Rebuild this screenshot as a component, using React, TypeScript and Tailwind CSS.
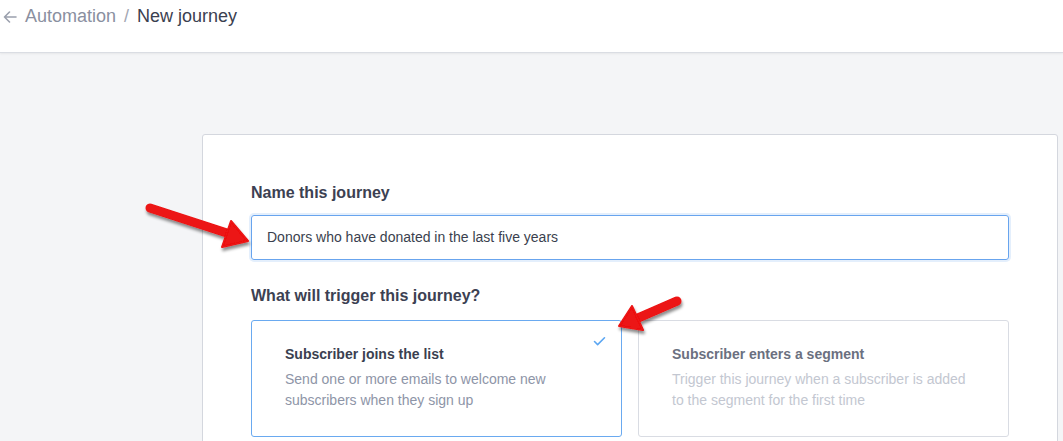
import { Check } from "lucide-react";

const TriggerCard = ({
  title,
  text,
  active,
}: {
  title: string;
  text: string;
  active?: boolean;
}) => (
  <div
    className={`relative rounded-[3px] border bg-white pl-[33px] pr-[40px] pt-[22px] pb-[25px] ${
      active ? "border-[#6aaaf0]" : "border-[#d9dce3]"
    }`}
  >
    {active && (
      <Check
        className="absolute right-[14px] top-[13px] text-[#5ba6f2]"
        size={15}
        strokeWidth={2.5}
      />
    )}
    <div
      className={`text-[14px] font-bold leading-[22px] ${
        active ? "text-[#3a3f50]" : "text-[#6b7080]"
      }`}
    >
      {title}
    </div>
    <div
      className={`mt-[4px] text-[14px] leading-[21px] ${
        active ? "text-[#8e95a7]" : "text-[#c3c7d1]"
      }`}
    >
      {text}
    </div>
  </div>
);

const Arrows = () => (
  <svg
    className="pointer-events-none absolute left-0 top-0"
    width="1063"
    height="441"
    viewBox="0 0 1063 441"
  >
    <defs>
      <filter id="shadow" x="-20%" y="-20%" width="140%" height="160%">
        <feDropShadow dx="1" dy="3" stdDeviation="1.5" floodColor="#000" floodOpacity="0.45" />
      </filter>
    </defs>
    <g filter="url(#shadow)" fill="#ec1212" stroke="#ec1212">
      {/* arrow pointing at the name input */}
      <line x1="150" y1="208" x2="230" y2="234" strokeWidth="9" strokeLinecap="round" />
      <polygon points="248,241 222,247 231,221" strokeWidth="2" strokeLinejoin="round" />
      {/* arrow pointing at the selected trigger */}
      <line x1="677" y1="301" x2="638" y2="318" strokeWidth="9" strokeLinecap="round" />
      <polygon points="619,326 643,330 632,306" strokeWidth="2" strokeLinejoin="round" />
    </g>
  </svg>
);

const App = () => {
  return (
    <div
      className="relative h-[441px] w-full overflow-hidden bg-[#f4f5f7]"
      style={{ fontFamily: '"Liberation Sans", Arial, sans-serif' }}
    >
      <header className="h-[53px] border-b border-[#dadde3] bg-white shadow-[0_1px_2px_rgba(0,0,0,0.06)]">
        <div className="flex items-center pl-[3px] pt-[5px] text-[18px] leading-[22px]">
          <svg width="14" height="12" viewBox="0 0 14 12" className="mt-[1px]">
            <path
              d="M13 6H1.5M6.5 1L1.5 6l5 5"
              fill="none"
              stroke="#9ba0ad"
              strokeWidth="1.6"
              strokeLinecap="round"
              strokeLinejoin="round"
            />
          </svg>
          <span className="ml-[8px] text-[#8a8fa0]">Automation</span>
          <span className="mx-[8px] text-[#a3a7b3]">/</span>
          <span className="text-[#3b4050]">New journey</span>
        </div>
      </header>

      <div className="ml-[202px] mr-[5px] mt-[81px] rounded-t-[3px] border border-[#d4d7de] bg-white px-[48px] pt-[47px] pb-[40px]">
        <h2 className="text-[16px] font-bold leading-[22px] text-[#3c4152]">
          Name this journey
        </h2>
        <div className="mt-[11px] flex h-[45px] items-center rounded-[3px] border border-[#68a4ee] px-[15px] text-[14px] text-[#3a3f4e] shadow-[0_0_0_2px_rgba(104,164,238,0.18)]">
          Donors who have donated in the last five years
        </div>

        <h2 className="mt-[25px] text-[16px] font-bold leading-[22px] text-[#3c4152]">
          What will trigger this journey?
        </h2>
        <div className="mt-[13px] grid grid-cols-2 gap-[16px]">
          <TriggerCard
            active
            title="Subscriber joins the list"
            text="Send one or more emails to welcome new subscribers when they sign up"
          />
          <TriggerCard
            title="Subscriber enters a segment"
            text="Trigger this journey when a subscriber is added to the segment for the first time"
          />
        </div>
      </div>

      <Arrows />
    </div>
  );
};

export default App;
